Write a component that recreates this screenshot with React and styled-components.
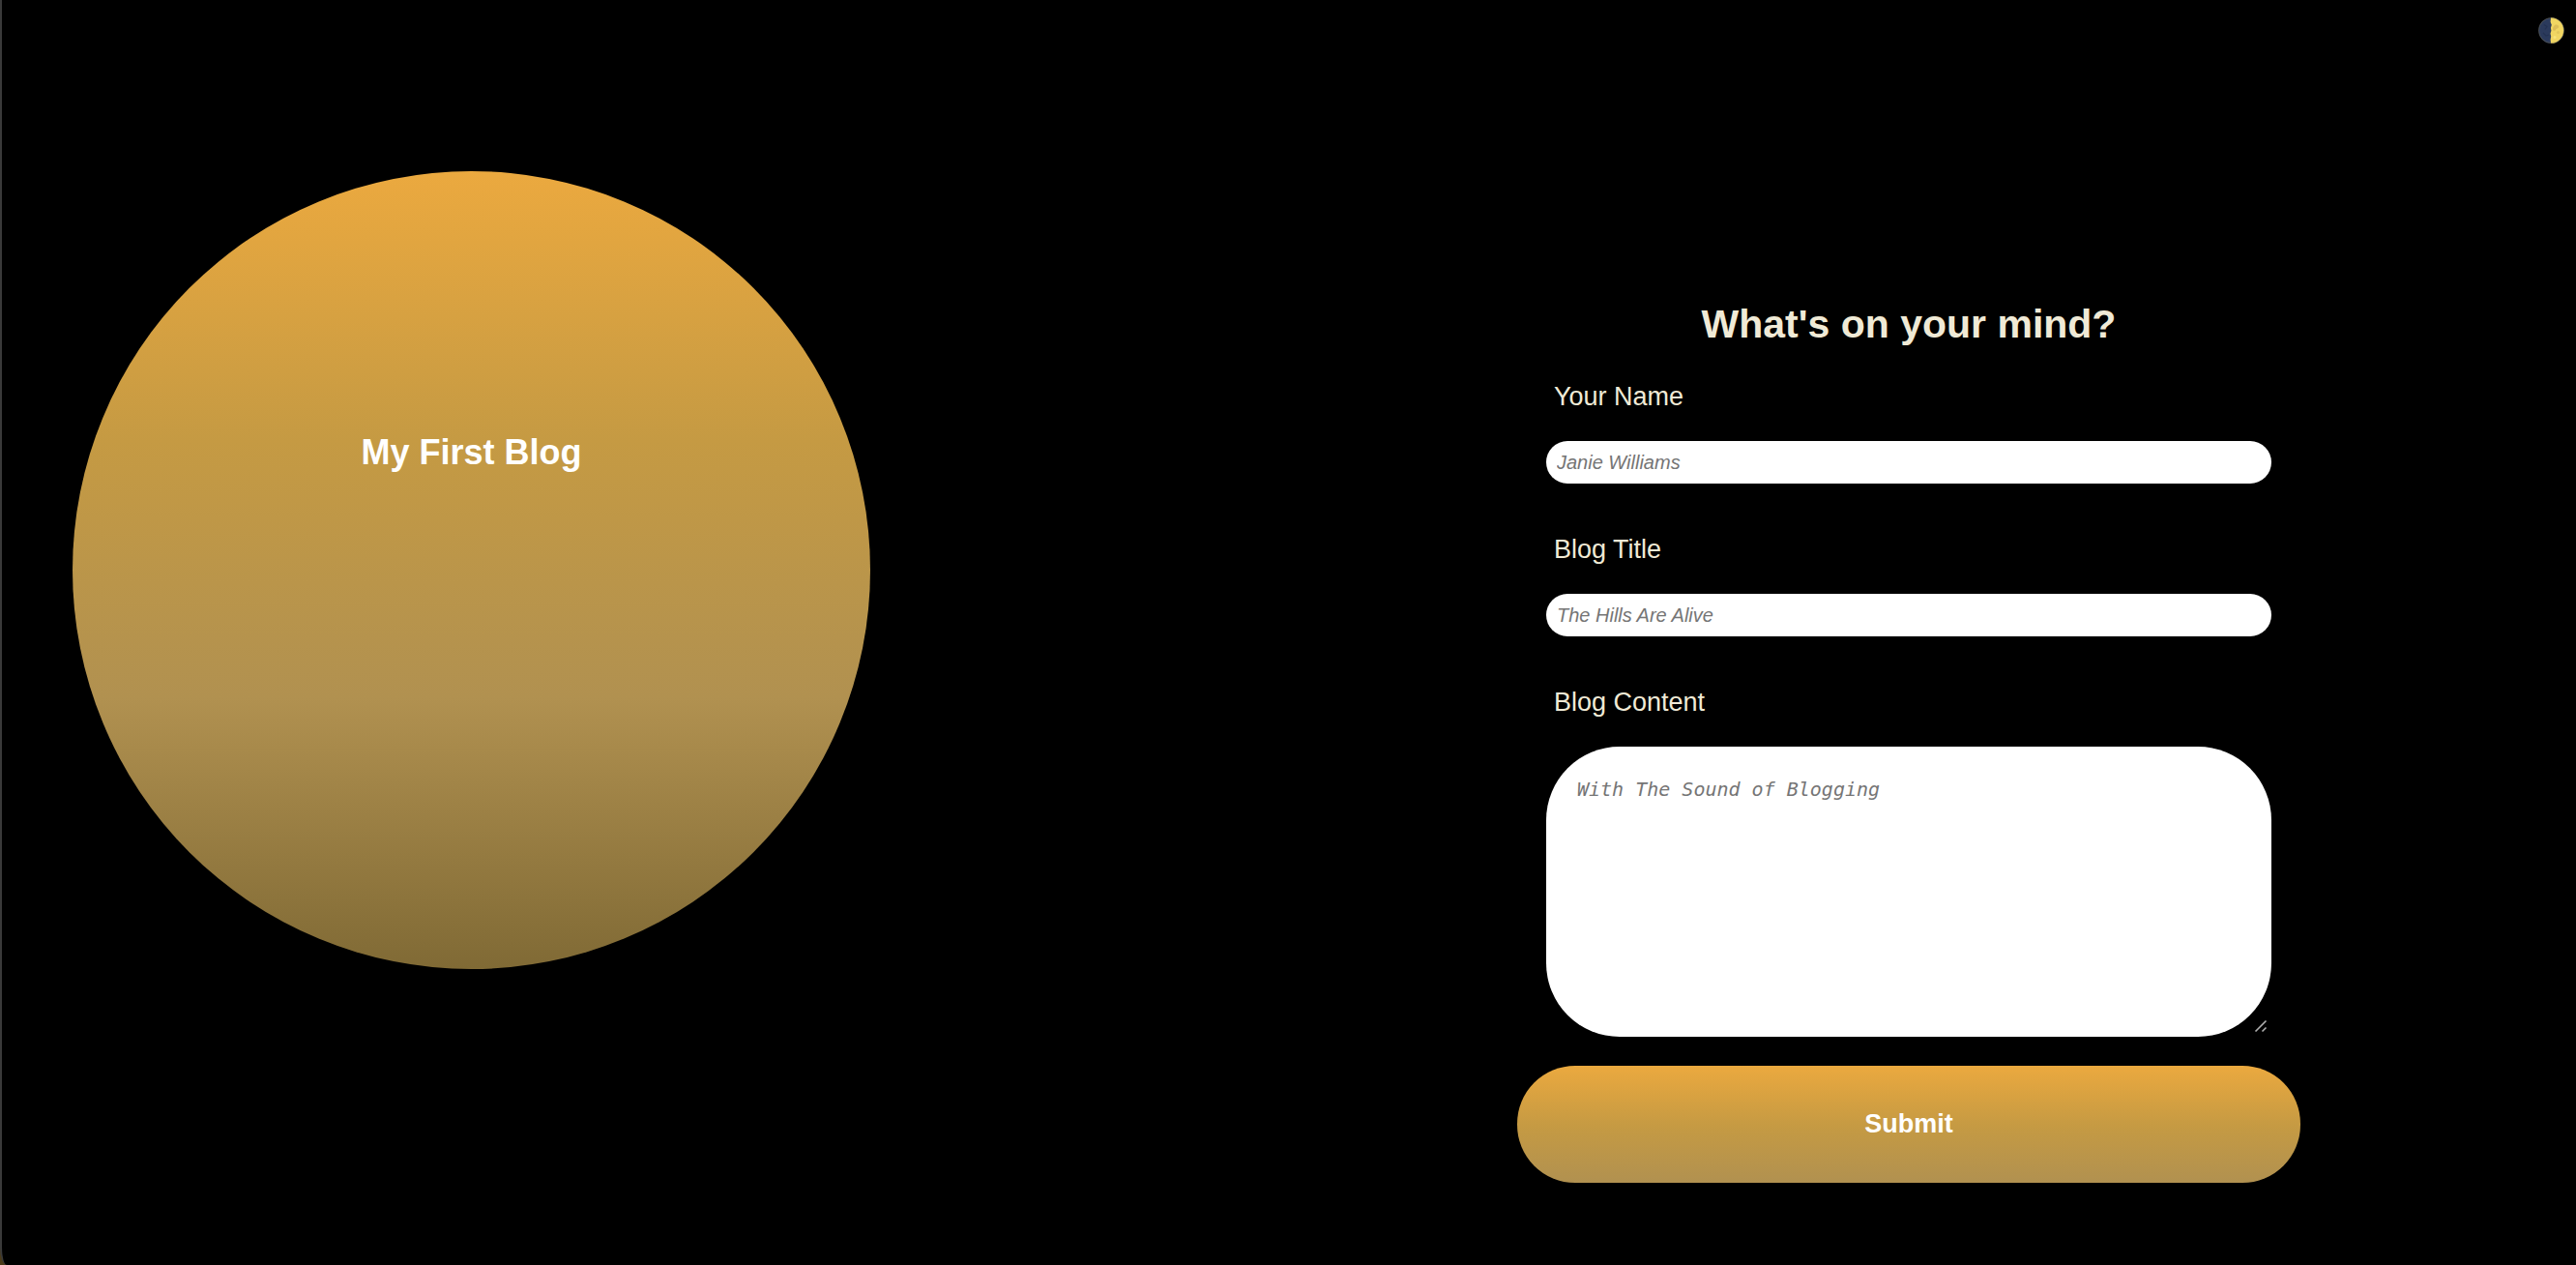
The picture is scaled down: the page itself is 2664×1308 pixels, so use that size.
import React, { useState } from "react";
import styled, { createGlobalStyle } from "styled-components";

const GlobalStyle = createGlobalStyle`
  *, *::before, *::after { box-sizing: border-box; }
  body {
    margin: 0;
    background: #4a3a18;
    font-family: "Liberation Sans", Arial, Helvetica, sans-serif;
  }
`;

const Page = styled.div`
  display: flex;
  flex-direction: column;
  min-height: 100vh;
  background: #000;
  border-left: 2px solid #3a3a3a;
  border-bottom-left-radius: 7px 18px;
`;

const Header = styled.header`
  display: flex;
  justify-content: flex-end;
  padding: 18px 12px;
`;

const ThemeToggle = styled.button`
  display: block;
  width: 27px;
  height: 27px;
  padding: 0;
  border: 0;
  border-radius: 50%;
  background: none;
  cursor: pointer;

  svg { display: block; }
`;

const Main = styled.main`
  display: grid;
  grid-template-columns: 1fr 1fr;
  align-items: start;
  padding: 114px 57px 84px 73px;
  flex: 1;

  @media (max-width: 1700px) {
    grid-template-columns: 1fr;
    row-gap: 48px;
    padding: 48px;
  }
`;

const Sun = styled.section`
  width: 100%;
  max-width: 825px;
  aspect-ratio: 1;
  padding-top: 270px;
  border-radius: 50%;
  background: linear-gradient(#eba93f, #c59a43 34%, #b19150 66%, #806a35);
`;

const SiteTitle = styled.h1`
  margin: 0;
  color: #fff;
  font-size: 36px;
  line-height: 42px;
  text-align: center;
`;

const BlogForm = styled.form`
  display: flex;
  flex-direction: column;
  gap: 30px;
  justify-self: center;
  width: 100%;
  max-width: 810px;
  padding-top: 135px;
`;

const Fields = styled.div`
  display: flex;
  flex-direction: column;
  gap: 52px;
  padding: 0 30px;
`;

const FormTitle = styled.h2`
  margin: 0 0 6px;
  color: #f0ead6;
  font-size: 41px;
  line-height: 46px;
  text-align: center;
`;

const Field = styled.div`
  display: flex;
  flex-direction: column;
  gap: 30px;
`;

const Label = styled.label`
  padding-left: 8px;
  color: #f0ead6;
  font-size: 27px;
  line-height: 32px;
`;

const TextInput = styled.input`
  width: 100%;
  height: 44px;
  padding: 0 11px;
  border: 0;
  border-radius: 22px;
  background: #fff;
  font-family: inherit;
  font-size: 20px;

  &::placeholder { color: #757575; font-style: italic; }
`;

const TextAreaFrame = styled.div`
  position: relative;
`;

const TextArea = styled.textarea`
  display: block;
  width: 100%;
  height: 300px;
  padding: 32px;
  border: 0;
  border-radius: 76px;
  background: #fff;
  font-family: "DejaVu Sans Mono", Menlo, monospace;
  font-size: 20px;
  line-height: 24px;
  resize: vertical;

  &::placeholder { color: #757575; font-style: italic; }
  &::-webkit-resizer { background: transparent; }
`;

const ResizeGrip = styled.svg`
  position: absolute;
  right: 4px;
  bottom: 4px;
  pointer-events: none;
`;

const SubmitButton = styled.button`
  height: 121px;
  border: 0;
  border-radius: 60px;
  background: linear-gradient(#eba93f, #c59a43 52%, #b19150);
  color: #fff;
  font-family: inherit;
  font-size: 27px;
  font-weight: bold;
  cursor: pointer;
`;

function Moon() {
  return (
    <svg width="27" height="27" viewBox="0 0 27 27" aria-hidden="true">
      <circle cx="13.5" cy="13.5" r="13.3" fill="#2b3a5c" />
      <path d="M13 .2a13.3 13.3 0 0 1 0 26.6l-.4-4 .6-3-.7-3 .9-3-.5-3 .9-3-1.2-3z" fill="#f1d662" />
      <path d="M17 8c2-1.2 4.6 0 4.2 2-.6 1.8-2.8 1.2-3.2 2.8-.3 1.4-3 1.4-3-.4 0-1.8.6-3.2 2-4.4z" fill="#dcbd57" />
      <circle cx="20.5" cy="15.5" r="1.6" fill="#e3c75c" />
      <circle cx="17" cy="20.5" r="1.5" fill="#f8e47c" />
      <path d="M6 7.5l3 2-2 3M5 16l3 3 3-1" fill="none" stroke="#243252" strokeWidth="1.2" />
      <circle cx="13.5" cy="13.5" r="13" fill="none" stroke="#8a7a4a" strokeWidth=".6" opacity=".6" />
    </svg>
  );
}

const textFields = [
  { id: "name", label: "Your Name", placeholder: "Janie Williams" },
  { id: "title", label: "Blog Title", placeholder: "The Hills Are Alive" },
];

export default function App() {
  const [post, setPost] = useState({ name: "", title: "", content: "" });
  const update = (event) => setPost({ ...post, [event.target.name]: event.target.value });

  return (
    <>
      <GlobalStyle />
      <Page>
        <Header>
          <ThemeToggle type="button" aria-label="Toggle theme">
            <Moon />
          </ThemeToggle>
        </Header>
        <Main>
          <Sun>
            <SiteTitle>My First Blog</SiteTitle>
          </Sun>
          <BlogForm onSubmit={(event) => event.preventDefault()}>
            <FormTitle>What's on your mind?</FormTitle>
            <Fields>
              {textFields.map(({ id, label, placeholder }) => (
                <Field key={id}>
                  <Label htmlFor={id}>{label}</Label>
                  <TextInput id={id} name={id} placeholder={placeholder} value={post[id]} onChange={update} />
                </Field>
              ))}
              <Field>
                <Label htmlFor="content">Blog Content</Label>
                <TextAreaFrame>
                  <TextArea
                    id="content"
                    name="content"
                    placeholder="With The Sound of Blogging"
                    value={post.content}
                    onChange={update}
                  />
                  <ResizeGrip width="14" height="14" viewBox="0 0 14 14" aria-hidden="true">
                    <path d="M1.5 12.5l11-11M8.5 12.5l4-4" stroke="#b0b0b0" strokeWidth="1.6" />
                  </ResizeGrip>
                </TextAreaFrame>
              </Field>
            </Fields>
            <SubmitButton type="submit">Submit</SubmitButton>
          </BlogForm>
        </Main>
      </Page>
    </>
  );
}
